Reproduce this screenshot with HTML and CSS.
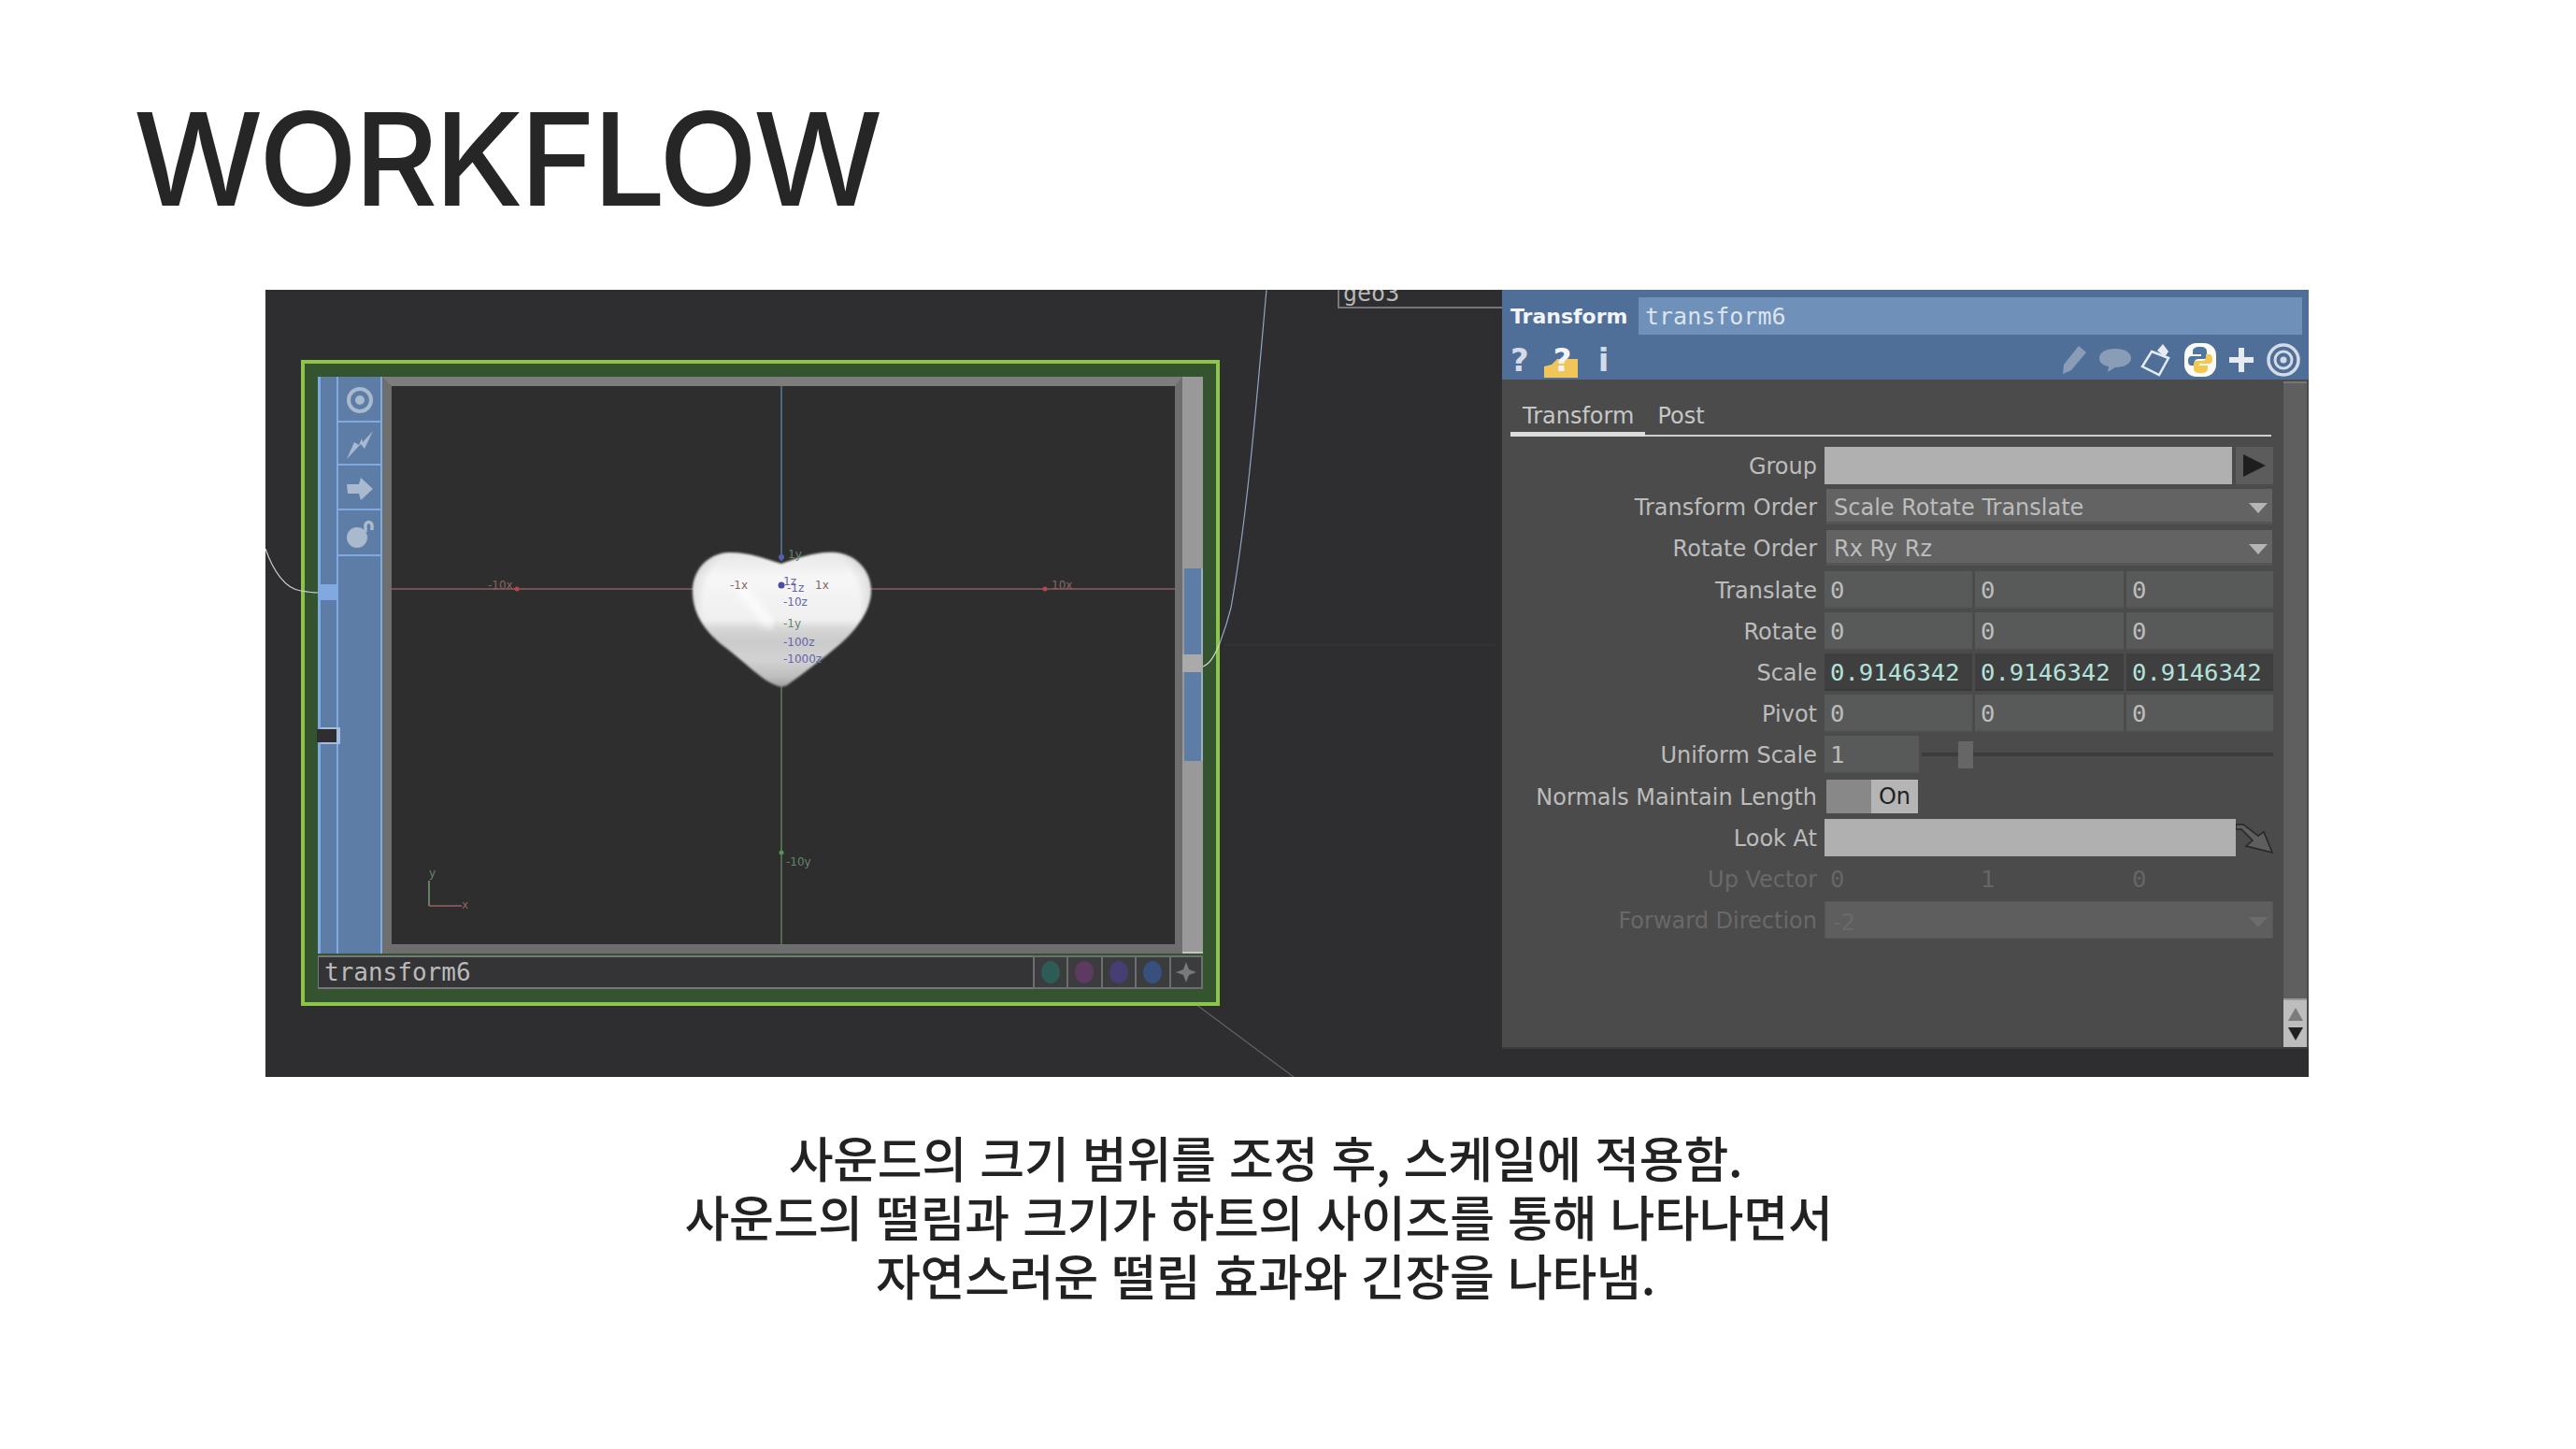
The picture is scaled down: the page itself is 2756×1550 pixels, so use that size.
FILE: index.html
```html
<!DOCTYPE html>
<html lang="ko">
<head>
  <meta charset="UTF-8">
  <meta name="viewport" content="width=device-width, initial-scale=1.0">
  <title>Workflow</title>
  <link rel="stylesheet" href="styles.css">
</head>
<body>
  <h1 class="title">WORKFLOW</h1>

  <div class="canvas">
    <!-- wires behind the node -->
    <svg class="wires" viewBox="284 310 2186 842">
      <path d="M1355 310C1345 420 1335 550 1317 650C1312 670 1308 680 1305 688" stroke="#8fa6c4"/>
      <path d="M284 587C292 610 305 630 322 632" stroke="#c8ced6"/>
      <path d="M1259 1059L1384 1152" stroke="#616366"/>
      <path d="M1310 690H1600" stroke="#38383a"/>
      <path d="M1432 310V329H1607" stroke="#77777a" stroke-width="2"/>
    </svg>
    <div class="geo-label">geo3</div>

    <div class="node">
      <div class="node-main">
        <div class="inputs">
          <div class="tab"></div>
          <div class="notch"></div>
        </div>
        <div class="tools">
          <div class="tool">
            <svg width="30" height="30" viewBox="0 0 30 30"><circle cx="15" cy="15" r="12" fill="none" stroke="#a9b9ce" stroke-width="4"/><circle cx="15" cy="15" r="5" fill="#a9b9ce"/></svg>
          </div>
          <div class="tool">
            <svg width="30" height="32" viewBox="0 0 30 32"><path d="M29 1L20 20L16 15L1 31L9 13L14 16L17 9L18 13Z" fill="#a9b9ce"/></svg>
          </div>
          <div class="tool">
            <svg width="30" height="26" viewBox="0 0 30 26"><path d="M16 1L29 13L16 25L14 18H2L1 8H14Z" fill="#a9b9ce"/></svg>
          </div>
          <div class="tool">
            <svg width="30" height="30" viewBox="0 0 30 30"><circle cx="12" cy="19" r="11" fill="#a9b9ce"/><path d="M21 13V6A3.500 3.500 0 0 1 28 6V11" fill="none" stroke="#a9b9ce" stroke-width="3.500"/></svg>
          </div>
        </div>
        <div class="viewer">
          <svg class="view" viewBox="419 413 838 597">
            <defs>
              <linearGradient id="heartFill" x1="0" y1="0" x2="0" y2="1">
                <stop offset="0" stop-color="#e6e6e6"/>
                <stop offset="0.18" stop-color="#f6f6f6"/>
                <stop offset="0.5" stop-color="#f0f0f0"/>
                <stop offset="0.57" stop-color="#d6d6d6"/>
                <stop offset="0.66" stop-color="#cbcbcb"/>
                <stop offset="0.8" stop-color="#d2d2d2"/>
                <stop offset="0.93" stop-color="#bdbdbd"/>
                <stop offset="1" stop-color="#a0a0a0"/>
              </linearGradient>
              <radialGradient id="heartEdge" gradientUnits="userSpaceOnUse" cx="836" cy="650" r="104">
                <stop offset="0.8" stop-color="#000" stop-opacity="0"/>
                <stop offset="1" stop-color="#000" stop-opacity="0.14"/>
              </radialGradient>
              <filter id="soft"><feGaussianBlur stdDeviation="1"/></filter>
              <filter id="softer"><feGaussianBlur stdDeviation="5"/></filter>
            </defs>
            <path d="M419 630H1257" stroke="#8a5d60" stroke-width="1.500"/>
            <path d="M836 413V600" stroke="#56789f" stroke-width="1.500"/>
            <path d="M836 730V1010" stroke="#5c7f58" stroke-width="1.500"/>
            <path filter="url(#soft)" d="M836 603C820 598 800 590 778 591C755 593 741 612 741 632C741 655 752 672 770 688C795 706 815 728 830 733Q836 736 842 733C860 720 880 705 900 688C920 670 932 650 932 632C932 612 918 594 895 591C875 589 852 597 836 603Z" fill="url(#heartFill)"/>
            <path filter="url(#soft)" d="M836 603C820 598 800 590 778 591C755 593 741 612 741 632C741 655 752 672 770 688C795 706 815 728 830 733Q836 736 842 733C860 720 880 705 900 688C920 670 932 650 932 632C932 612 918 594 895 591C875 589 852 597 836 603Z" fill="url(#heartEdge)"/>
            <path filter="url(#softer)" d="M790 625L825 670" stroke="#fff" stroke-width="8"/>
            <circle cx="553" cy="630" r="2.500" fill="#b5484f"/>
            <circle cx="1118" cy="630" r="2.500" fill="#b5484f"/>
            <circle cx="836" cy="912" r="2.500" fill="#5c8f58"/>
            <circle cx="836" cy="626" r="3.500" fill="#4a4aa8"/>
            <circle cx="836" cy="596" r="3" fill="#5560b0"/>
            <g class="labels">
              <text class="red" x="522" y="630">-10x</text>
              <text class="red" x="1125" y="630">10x</text>
              <text class="green" x="841" y="926">-10y</text>
              <text class="red" x="781" y="630">-1x</text>
              <text class="red" x="872" y="630">1x</text>
              <text class="green" x="843" y="597">1y</text>
              <text class="blue" x="838" y="626">1z</text>
              <text class="blue" x="842" y="633">-1z</text>
              <text class="blue" x="838" y="648">-10z</text>
              <text class="green" x="838" y="671">-1y</text>
              <text class="blue" x="838" y="691">-100z</text>
              <text class="blue" x="838" y="709">-1000z</text>
              <text class="green" x="459" y="938">y</text>
              <text class="red" x="494" y="972">x</text>
            </g>
            <path d="M459 942V969" stroke="#7c9a78" stroke-width="1.500"/>
            <path d="M459 969H494" stroke="#9a5f66" stroke-width="1.500"/>
          </svg>
        </div>
        <div class="outputs">
          <div class="out-blue out-a"></div>
          <div class="out-tab"></div>
          <div class="out-blue out-b"></div>
        </div>
      </div>
      <div class="node-bar">
        <div class="node-name">transform6</div>
        <div class="flag"><span class="dot dot-teal"></span></div>
        <div class="flag"><span class="dot dot-pink"></span></div>
        <div class="flag"><span class="dot dot-purple"></span></div>
        <div class="flag"><span class="dot dot-blue"></span></div>
        <div class="flag">
          <svg width="24" height="24" viewBox="0 0 24 24"><path d="M12 1L15 9L23 12L15 15L12 23L9 15L1 12L9 9Z" fill="#77797a"/></svg>
        </div>
      </div>
    </div>

    <!-- the ends of the wires run over the node -->
    <svg class="wires" viewBox="284 310 2186 842">
      <path d="M1305 688C1300 700 1295 710 1287 713" stroke="#d0d8d0"/>
      <path d="M322 632C328 633 334 634 340 634" stroke="#c8ced6"/>
    </svg>

    <div class="panel">
      <div class="panel-head">
        <div class="head-top">
          <span class="op-type">Transform</span>
          <div class="op-name">transform6</div>
        </div>
        <div class="head-icons">
          <div class="icons-left">
            <span class="q">?</span>
            <span class="q-folder">
              <svg width="36" height="20" viewBox="0 0 36 20"><path d="M0 20V8L8 6L14 0H36V20Z" fill="#f0c65a"/></svg>
              <span class="q q-over">?</span>
            </span>
            <span class="q q-info">i</span>
          </div>
          <div class="icons-right">
            <svg width="28" height="32" viewBox="0 0 28 32"><path d="M19 1L27 8L11 27L2 31L3 21Z" fill="#8a9db6"/></svg>
            <svg width="36" height="28" viewBox="0 0 36 28"><path d="M18 2C28 2 35 6 35 12C35 18 28 22 18 22L10 27L11 21C5 20 1 17 1 12C1 6 8 2 18 2Z" fill="#8a9db6"/></svg>
            <svg class="icon-tight" width="36" height="36" viewBox="0 0 36 36"><path d="M13 9L31 16L21 34L3 25Z" fill="none" stroke="#e6ebf2" stroke-width="2.500"/><path d="M19 8L25 1L31 9L27 15Z" fill="#e6ebf2"/></svg>
            <svg width="34" height="36" viewBox="0 0 34 36"><rect width="34" height="36" rx="13" fill="#fbfbf8"/><path d="M17 4C11 4 9 6 9 9V12H18V14H8C5 14 4 16 4 19C4 22 5 24 8 24H11V20C11 18 13 17 15 17H21C23 17 24 16 24 14V9C24 6 22 4 17 4Z" fill="#4f76a3"/><path d="M17 32C23 32 25 30 25 27V24H16V22H26C29 22 30 20 30 17C30 14 29 12 26 12H23V16C23 18 21 19 19 19H13C11 19 10 20 10 22V27C10 30 12 32 17 32Z" fill="#f4c84e"/></svg>
            <svg width="30" height="30" viewBox="0 0 30 30"><path d="M15 2V28M2 15H28" stroke="#e6ebf2" stroke-width="6"/></svg>
            <svg width="36" height="36" viewBox="0 0 36 36"><circle cx="18" cy="18" r="16" fill="none" stroke="#d4dbe6" stroke-width="3.500"/><circle cx="18" cy="18" r="9" fill="none" stroke="#d4dbe6" stroke-width="3"/><circle cx="18" cy="18" r="3.500" fill="#d4dbe6"/></svg>
          </div>
        </div>
      </div>
      <div class="panel-body">
        <div class="params">
          <div class="tabs">
            <span class="page-tab page-tab-on">Transform</span>
            <span class="page-tab">Post</span>
          </div>
          <div class="row">
            <label>Group</label>
            <div class="split"><div class="str str-group"></div><div class="str-btn"><span class="tri-right"></span></div></div>
          </div>
          <div class="row">
            <label>Transform Order</label>
            <div class="menu">Scale Rotate Translate<span class="tri-down"></span></div>
          </div>
          <div class="row">
            <label>Rotate Order</label>
            <div class="menu">Rx Ry Rz<span class="tri-down"></span></div>
          </div>
          <div class="row">
            <label>Translate</label>
            <div class="nums"><div class="num">0</div><div class="num">0</div><div class="num">0</div></div>
          </div>
          <div class="row">
            <label>Rotate</label>
            <div class="nums"><div class="num">0</div><div class="num">0</div><div class="num">0</div></div>
          </div>
          <div class="row">
            <label>Scale</label>
            <div class="nums"><div class="num num-set">0.9146342</div><div class="num num-set">0.9146342</div><div class="num num-set">0.9146342</div></div>
          </div>
          <div class="row">
            <label>Pivot</label>
            <div class="nums"><div class="num">0</div><div class="num">0</div><div class="num">0</div></div>
          </div>
          <div class="row">
            <label>Uniform Scale</label>
            <div class="slider-row">
              <div class="num num-short">1</div>
              <div class="slider"><span class="knob"></span></div>
            </div>
          </div>
          <div class="row">
            <label>Normals Maintain Length</label>
            <div class="toggle"><span class="toggle-off"></span><span class="toggle-on">On</span></div>
          </div>
          <div class="row">
            <label>Look At</label>
            <div class="split">
              <div class="str str-look"></div>
              <svg class="look-arrow" width="40" height="36" viewBox="0 0 40 36"><path d="M0 4H8L24 16L30 12L39 34L11 27L18 21L6 9H0Z" fill="#5e5e5e" stroke="#262626" stroke-width="1.500"/></svg>
            </div>
          </div>
          <div class="row row-off">
            <label>Up Vector</label>
            <div class="nums"><div class="num num-off">0</div><div class="num num-off">1</div><div class="num num-off">0</div></div>
          </div>
          <div class="row row-off">
            <label>Forward Direction</label>
            <div class="menu menu-off">-2<span class="tri-down"></span></div>
          </div>
        </div>
        <div class="scroll">
          <div class="scroll-track"></div>
          <div class="scroll-btns"><span class="arrow-up"></span><span class="arrow-down"></span></div>
        </div>
      </div>
    </div>
  </div>

  <div class="caption">
    <p class="caption-line">사운드의 크기 범위를 조정 후, 스케일에 적용함.</p>
    <p class="caption-line caption-mid">사운드의 떨림과 크기가 하트의 사이즈를 통해 나타나면서</p>
    <p class="caption-line">자연스러운 떨림 효과와 긴장을 나타냄.</p>
  </div>
</body>
</html>
```

FILE: styles.css
```css
body {
  margin: 0;
  background-color: #fff;
  font-family: "DejaVu Sans", sans-serif;
}

.title {
  margin: 0;
  padding: 101px 0 0 143px;
  font-family: Inter, sans-serif;
  font-size: 138px;
  font-weight: 450;
  line-height: 138px;
  letter-spacing: -3.5px;
  color: #262626;
}

.canvas {
  position: relative;
  display: flex;
  justify-content: flex-end;
  align-items: flex-start;
  width: 2186px;
  height: 842px;
  margin: 71px 0 0 284px;
  background-color: #2e2e30;
  overflow: hidden;
}

.caption {
  margin: 54px 48px 0 0;
  font-family: "Noto Sans CJK KR", sans-serif;
  font-size: 52px;
  font-weight: 500;
  line-height: 63px;
  letter-spacing: -0.25px;
  text-align: center;
  color: #222;
}

.caption-line {
  margin: 0;
}

.caption-mid {
  padding-right: 15px;
}

/* node graph */
.wires {
  position: absolute;
  left: 0;
  top: 0;
  width: 2186px;
  height: 842px;
  fill: none;
  stroke-width: 1.2;
}

.geo-label {
  position: absolute;
  left: 1149px;
  top: -11px;
  padding: 0 4px;
  font-family: "DejaVu Sans Mono", monospace;
  font-size: 25px;
  line-height: 30px;
  color: #b8b8b8;
}

.node {
  position: absolute;
  left: 38px;
  top: 75px;
  box-sizing: border-box;
  width: 983px;
  height: 691px;
  padding: 14px 14px 14px;
  border: 4px solid #8cc547;
  background-color: #34532f;
}

.node-main {
  display: flex;
  height: 617px;
}

.inputs {
  position: relative;
  box-sizing: border-box;
  width: 22px;
  border-left: 3px solid #7fa9e0;
  border-right: 2px solid #7fa9e0;
  background-color: #5d7ca6;
}

.tab {
  position: absolute;
  left: 0;
  right: 0;
  top: 222px;
  height: 17px;
  background-color: #7fa9e0;
}

.notch {
  position: absolute;
  left: -4px;
  right: 0;
  top: 377px;
  height: 14px;
  background-color: #2e2e30;
  box-shadow: 4px -2px 0 #a3bce0, 4px 2px 0 #a3bce0;
}

.tools {
  box-sizing: border-box;
  width: 47px;
  border-right: 2px solid #7fa9e0;
  background-color: #5d7ca6;
}

.tool {
  display: flex;
  align-items: center;
  justify-content: center;
  box-sizing: border-box;
  height: 49px;
  padding-top: 3px;
  border-bottom: 2px solid #7fa9e0;
}

.tool:nth-child(2) {
  height: 46px;
}

.tool:nth-child(3) {
  height: 48px;
}

.viewer {
  flex: 1;
  box-sizing: border-box;
  border-style: solid;
  border-width: 10px 8px 10px 10px;
  border-color: #7d7d7d #6e6e6e #6e6e6e #6e6e6e;
  background-color: #2e2e2e;
}

.view {
  display: block;
  width: 838px;
  height: 597px;
}

.labels text {
  font-family: "DejaVu Sans", sans-serif;
  font-size: 12px;
}

.labels .red {
  fill: #8a6464;
}

.labels .green {
  fill: #64866a;
}

.labels .blue {
  fill: #6464ac;
}

.outputs {
  display: flex;
  flex-direction: column;
  width: 22px;
  background-color: #999;
  padding-top: 205px;
  box-sizing: border-box;
  border-bottom: 2px solid #c4c4c4;
}

.out-blue {
  box-sizing: border-box;
  margin-left: 2px;
  border-right: 2px solid #a3aebd;
  background-color: #5d7ca6;
}

.out-a {
  height: 92px;
}

.out-tab {
  height: 19px;
  background-color: #aaa;
}

.out-b {
  height: 95px;
}

.node-bar {
  display: flex;
  height: 36px;
  margin-top: 2px;
}

.node-name {
  flex: 1;
  padding-left: 6px;
  border-top: 2px solid #77777a;
  border-bottom: 2px solid #77777a;
  border-left: 1px solid #77777a;
  background-color: #343436;
  font-family: "DejaVu Sans Mono", monospace;
  font-size: 26px;
  line-height: 32px;
  color: #bababa;
}

.flag {
  display: flex;
  align-items: center;
  justify-content: center;
  box-sizing: border-box;
  width: 36.5px;
  border: solid #6e6e70;
  border-width: 2px 0 2px 2px;
  background-color: #3b3c3d;
}

.flag:last-child {
  border-right-width: 2px;
}

.dot {
  width: 20px;
  height: 24px;
  border-radius: 50%;
}

.dot-teal {
  background-color: #2d5b56;
}

.dot-pink {
  background-color: #5c3a62;
}

.dot-purple {
  background-color: #473f74;
}

.dot-blue {
  background-color: #38507e;
}

/* parameter panel */
.panel {
  position: relative;
  width: 863px;
  height: 812px;
  background-color: #4b4b4b;
}

.panel-head {
  box-sizing: border-box;
  height: 96px;
  padding: 8px 7px 0 9px;
  background-color: #4f6f99;
}

.head-top {
  display: flex;
  align-items: center;
  height: 40px;
}

.op-type {
  width: 137px;
  font-size: 22px;
  font-weight: bold;
  color: #f2f4f7;
}

.op-name {
  flex: 1;
  height: 40px;
  padding-left: 7px;
  background-color: #6f90b8;
  font-family: "DejaVu Sans Mono", monospace;
  font-size: 25px;
  line-height: 42px;
  color: #dce4ee;
}

.head-icons {
  display: flex;
  justify-content: space-between;
  align-items: center;
  box-sizing: border-box;
  height: 48px;
  padding-top: 5px;
}

.icons-left {
  display: flex;
  align-items: center;
  gap: 16px;
}

.q {
  font-size: 34px;
  font-weight: bold;
  line-height: 40px;
  color: #d4dbe6;
}

.q-folder {
  position: relative;
  display: flex;
  width: 38px;
  height: 38px;
  align-items: flex-end;
}

.q-over {
  position: absolute;
  left: 10px;
  top: -1px;
  color: #f2f4f8;
}

.q-info {
  margin-left: 4px;
}

.icons-right {
  display: flex;
  align-items: center;
  gap: 12px;
  margin-right: 2px;
}

.icon-tight {
  margin-left: -4px;
}

.panel-body {
  display: flex;
  height: 716px;
  box-sizing: border-box;
  border-bottom: 2px solid #3c3c3c;
}

.params {
  width: 836px;
  padding-left: 9px;
  box-sizing: border-box;
}

.tabs {
  display: flex;
  align-items: flex-end;
  box-sizing: border-box;
  width: 814px;
  height: 61px;
  border-bottom: 2px solid #cfcfcf;
  margin-bottom: 9px;
  font-size: 24px;
  color: #c6c6c6;
}

.page-tab {
  padding: 0 12px 6px 13px;
  line-height: 28px;
}

.page-tab-on {
  margin-bottom: -2px;
  border-bottom: 5px solid #dcdcdc;
  padding-bottom: 3px;
}

.row {
  display: grid;
  grid-template-columns: 328px 480px;
  column-gap: 8px;
  align-items: center;
  height: 44.2px;
  font-size: 24px;
  color: #bcbcbc;
}

.row label {
  position: relative;
  top: 1px;
  text-align: right;
}

.row-off {
  color: #696969;
}

.split {
  display: flex;
  align-items: center;
  gap: 4px;
}

.str {
  height: 40px;
  background-color: #b0b0b0;
}

.str-group {
  width: 436px;
}

.str-look {
  width: 440px;
}

.look-arrow {
  margin-left: -4px;
}

.str-btn {
  display: flex;
  align-items: center;
  justify-content: center;
  width: 40px;
  height: 40px;
  background-color: #5c5c5c;
}

.tri-right {
  width: 0;
  height: 0;
  border-style: solid;
  border-width: 12px 0 12px 24px;
  border-color: transparent transparent transparent #1e1e1e;
}

.menu {
  display: flex;
  justify-content: space-between;
  align-items: center;
  box-sizing: border-box;
  width: 477px;
  height: 38px;
  margin-left: 2px;
  padding: 5px 5px 0 8px;
  border-bottom: 3px solid #555;
  background-color: #636363;
  line-height: 30px;
}

.tri-down {
  width: 0;
  height: 0;
  border-style: solid;
  border-width: 11px 10px 0 10px;
  border-color: #b5b5b5 transparent transparent transparent;
}

.menu-off {
  width: 480px;
  height: 40px;
  margin-left: 0;
  border: 1px solid #575757;
  background-color: #5e5e5e;
  color: #6a6a6a;
}

.menu-off .tri-down {
  border-top-color: #6c6c6c;
}

.nums {
  display: grid;
  grid-template-columns: 158px 159px 157px;
  column-gap: 3px;
}

.num {
  box-sizing: border-box;
  height: 40px;
  padding-left: 6px;
  border-bottom: 2px solid #535353;
  background-color: #585a5a;
  font-family: "DejaVu Sans Mono", monospace;
  font-size: 25.6px;
  line-height: 40px;
  color: #bcbcbc;
}

.num-set {
  border-bottom-color: #3a3a3a;
  background-color: #3f3f3f;
  color: #b4e2da;
}

.num-off {
  border-bottom: none;
  background-color: transparent;
  color: #666;
}

.slider-row {
  display: flex;
  align-items: center;
}

.num-short {
  width: 101px;
}

.slider {
  position: relative;
  flex: 1;
  height: 4px;
  margin-left: 3px;
  background-color: #3c3c3c;
}

.knob {
  position: absolute;
  left: 39px;
  top: -12px;
  width: 16px;
  height: 29px;
  background-color: #666;
}

.toggle {
  display: flex;
  width: 98px;
  height: 36px;
  margin-left: 2px;
}

.toggle-off {
  width: 48px;
  background-color: #888;
}

.toggle-on {
  flex: 1;
  text-align: center;
  line-height: 36px;
  background-color: #b5b5b5;
  color: #222;
}

.scroll {
  display: flex;
  flex-direction: column;
  width: 25px;
  margin-top: 2px;
}

.scroll-track {
  flex: 1;
  background-color: #5f5f5f;
  border-top: 2px solid #777;
  border-bottom: 2px solid #999;
}

.scroll-btns {
  display: flex;
  flex-direction: column;
  align-items: center;
  justify-content: center;
  gap: 7px;
  height: 50px;
  background-color: #bdbdbd;
}

.arrow-up,
.arrow-down {
  width: 0;
  height: 0;
  border-style: solid;
  border-color: transparent;
}

.arrow-up {
  border-width: 0 8px 14px 8px;
  border-bottom-color: #7c7c7c;
}

.arrow-down {
  border-width: 14px 8px 0 8px;
  border-top-color: #222;
}
```
